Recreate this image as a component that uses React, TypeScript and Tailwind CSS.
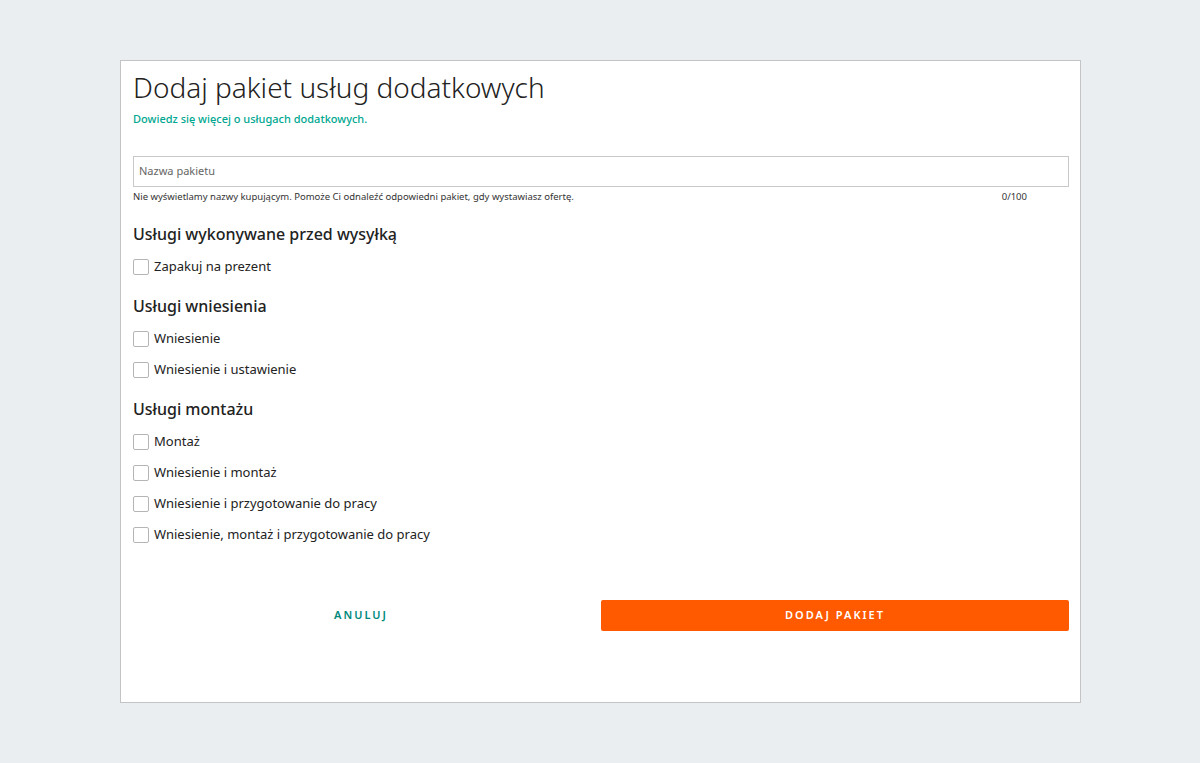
export default function App() {
  const Cb = ({ label }: { label: string }) => (
    <label className="flex items-center h-[31px] gap-[5px]">
      <span className="w-4 h-4 border border-[#b5b5b5] rounded-[2px] bg-white" />
      <span className="text-[13px] text-[#222]">{label}</span>
    </label>
  );
  const H = ({ t, mt }: { t: string; mt: string }) => (
    <h2 className={`${mt} text-[16px] font-medium text-[#222] leading-[20px] mb-[7px]`}>{t}</h2>
  );
  return (
    <div className="w-[1200px] h-[763px] bg-[#ebeef1] pt-[60px] pl-[120px] font-['Roboto',sans-serif]">
      <div className="w-[961px] h-[643px] bg-white border border-[#c4c4c4] pl-[12px] pr-[11px]">
        <h1 className="text-[28px] font-light text-[#222] leading-[34px] mt-[9px]">Dodaj pakiet usług dodatkowych</h1>
        <a className="block mt-[8px] text-[11px] font-medium text-[#00a790] leading-[14px] font-['Open_Sans',sans-serif]">Dowiedz się więcej o usługach dodatkowych.</a>
        <div className="mt-[30px] h-[31px] border border-[#c8c8c8] flex items-center px-[5px] text-[11px] text-[#666] font-['Open_Sans',sans-serif]">Nazwa pakietu</div>
        <div className="flex justify-between mt-[4px] text-[9.5px] text-[#333] leading-[12px] pr-[42px] font-['Open_Sans',sans-serif]">
          <span>Nie wyświetlamy nazwy kupującym. Pomoże Ci odnaleźć odpowiedni pakiet, gdy wystawiasz ofertę.</span>
          <span>0/100</span>
        </div>
        <H t="Usługi wykonywane przed wysyłką" mt="mt-[21px]" />
        <Cb label="Zapakuj na prezent" />
        <H t="Usługi wniesienia" mt="mt-[14px]" />
        <Cb label="Wniesienie" />
        <Cb label="Wniesienie i ustawienie" />
        <H t="Usługi montażu" mt="mt-[14px]" />
        <Cb label="Montaż" />
        <Cb label="Wniesienie i montaż" />
        <Cb label="Wniesienie i przygotowanie do pracy" />
        <Cb label="Wniesienie, montaż i przygotowanie do pracy" />
        <div className="mt-[50px] flex gap-[12px] font-['Open_Sans',sans-serif]">
          <button className="w-[456px] h-[31px] text-[11px] font-semibold tracking-[2px] text-[#00897b]">ANULUJ</button>
          <button className="flex-1 h-[31px] bg-[#ff5a00] rounded-[2px] text-[11px] font-semibold tracking-[2px] text-white">DODAJ PAKIET</button>
        </div>
      </div>
    </div>
  );
}
